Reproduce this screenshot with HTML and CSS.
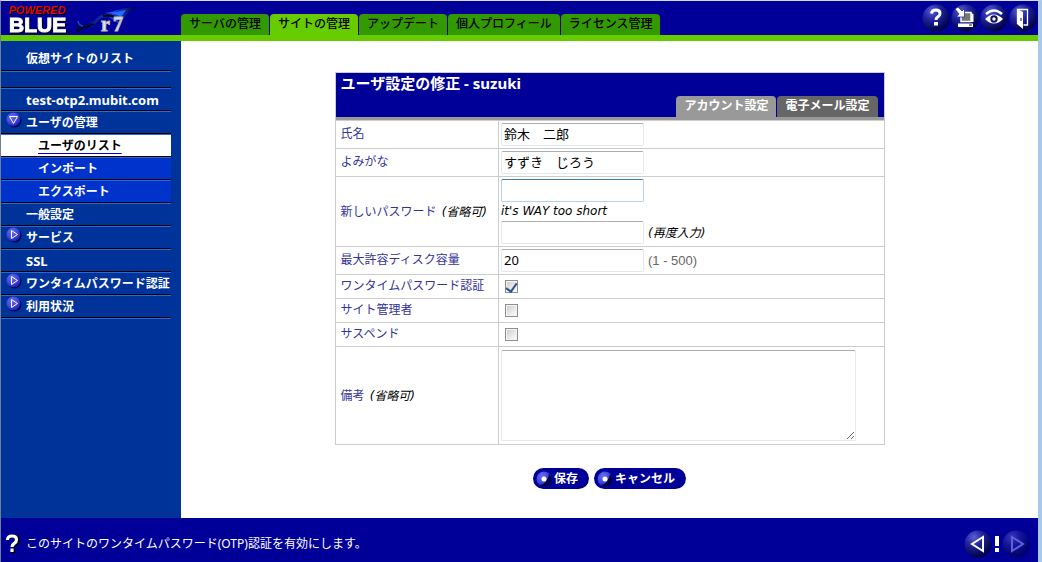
FILE: index.html
```html
<!DOCTYPE html>
<html lang="ja">
<head>
<meta charset="utf-8">
<title>ユーザ設定の修正</title>
<link rel="stylesheet" href="styles.css">
</head>
<body>
<svg class="defs" aria-hidden="true">
  <defs>
    <radialGradient id="orb" cx="35%" cy="25%" r="78%">
      <stop offset="0" stop-color="#5a60d0"/><stop offset=".4" stop-color="#2226a0"/><stop offset=".75" stop-color="#0b0e68"/><stop offset="1" stop-color="#00003c"/>
    </radialGradient>
    <radialGradient id="bead" cx="38%" cy="32%" r="78%">
      <stop offset="0" stop-color="#6a70f0"/><stop offset=".6" stop-color="#3840dc"/><stop offset="1" stop-color="#101480"/>
    </radialGradient>
    <linearGradient id="swoosh">
      <stop offset="0" stop-color="#001050"/><stop offset=".55" stop-color="#1648e8"/><stop offset=".8" stop-color="#0a2090"/><stop offset="1" stop-color="#000018"/>
    </linearGradient>
    <symbol id="bead-right" viewBox="0 0 16 16"><circle cx="8.500" cy="8.500" r="7" fill="#000055"/><circle cx="7.500" cy="7.500" r="7" fill="url(#bead)"/><path d="M5.500 3.500v8l6-4z" fill="none" stroke="#fff"/></symbol>
    <symbol id="bead-down" viewBox="0 0 16 16"><circle cx="8.500" cy="8.500" r="7" fill="#000055"/><circle cx="7.500" cy="7.500" r="7" fill="url(#bead)"/><path d="M3.500 4.500h8l-4 7z" fill="none" stroke="#fff"/></symbol>
    <symbol id="dot" viewBox="0 0 16 16"><circle cx="8" cy="8" r="7.500" fill="url(#bead)"/><path d="M13 3a7 7 0 0 1-9 11q7-1 9-11z" fill="#000044"/><circle cx="8" cy="8" r="2.500" fill="#fff"/></symbol>
  </defs>
</svg>
<div class="page">
  <header class="top">
    <svg class="logo" viewBox="0 0 180 34" role="img" aria-label="POWERED BLUE r7">
      <path d="M74 32q4-5 4-12 2 5 6 5 5-1 10-4l-1 3q-4 3-10 3-4 3-9 5z" fill="#000828"/>
      <path d="M77 20q1 5 5 5" stroke="#1a40c8" stroke-width="1.500" fill="none"/>
      <path d="M84 27q7-1 11-4l-8-1 6-2 5-5 12-4q10-4 25-5-9 5-13 13l-5 3-9-6-8 1-5 5-3 4z" fill="url(#swoosh)"/>
      <path d="M102 12q8-2 18 4l5-7-9 2z" fill="#246cff"/><path d="M102 15q10-2 18 5" stroke="#000020" stroke-width="2.500" fill="none"/>
      <text class="brand" x="8" y="31">BLUE</text>
      <text class="powered" x="8" y="13">POWERED</text>
      <text class="series" x="100" y="30">r</text><text class="series" x="112" y="30">7</text>
    </svg>
    <nav class="tabs">
      <a href="#">サーバの管理</a><a href="#" class="current">サイトの管理</a><a href="#">アップデート</a><a href="#">個人プロフィール</a><a href="#">ライセンス管理</a>
    </nav>
    <div class="tools">
      <button aria-label="ヘルプ"><svg viewBox="0 0 28 28"><circle cx="14" cy="14" r="13.500" fill="url(#orb)"/><path d="M9.500 9.500q.5-3.500 4.300-3.500 4.200 0 4.200 3.400 0 2-2.300 3.500-1.700 1.100-1.700 3" fill="none" stroke="#fff" stroke-width="3"/><path d="M12 18h4v3.500h-4z" fill="#fff"/></svg></button>
      <button aria-label="更新"><svg viewBox="0 0 28 28"><circle cx="14" cy="14" r="13.500" fill="url(#orb)"/><path d="M10 8.500h10v9H10z" fill="#777" stroke="#fff" stroke-width="1.500"/><path d="M20 9l2.500 1v8H20M7 19.500h15v3.500H7z" fill="#fff"/><path d="M18 21h3" stroke="#111166"/><path d="M4 5l3-2 4 4 2.500-2.500v8.500H5.500L8 10z" fill="#fff" stroke="#181b80" stroke-width=".7"/></svg></button>
      <button aria-label="モニタ"><svg viewBox="0 0 28 28"><circle cx="14" cy="14" r="13.500" fill="url(#orb)"/><path d="M6 10q8-7 16 0" fill="none" stroke="#fff" stroke-width="2.500"/><path d="M5 15q9-9 18 0-9 9-18 0z" fill="#fff"/><circle cx="14" cy="15" r="3.700" fill="#10125c"/><circle cx="14" cy="15" r="1.700" fill="#fff"/></svg></button>
      <button aria-label="ログアウト"><svg viewBox="0 0 28 28"><circle cx="14" cy="14" r="13.500" fill="url(#orb)"/><path d="M8.500 20V5.500h10V21h-4" fill="none" stroke="#fff" stroke-width="1.300"/><path d="M8 5l6 3v17l-6-5z" fill="#fff"/><path d="M12 14v3" stroke="#10125c"/></svg></button>
    </div>
  </header>
  <div class="middle">
    <nav class="side">
      <a href="#" class="first">仮想サイトのリスト</a>
      <div class="spacer"></div>
      <a href="#" class="host">test-otp2.mubit.com</a>
      <a href="#"><svg><use href="#bead-down"/></svg>ユーザの管理</a>
      <a href="#" class="sub selected">ユーザのリスト</a>
      <a href="#" class="sub">インポート</a>
      <a href="#" class="sub">エクスポート</a>
      <a href="#">一般設定</a>
      <a href="#"><svg><use href="#bead-right"/></svg>サービス</a>
      <a href="#" class="host">SSL</a>
      <a href="#"><svg><use href="#bead-right"/></svg>ワンタイムパスワード認証</a>
      <a href="#"><svg><use href="#bead-right"/></svg>利用状況</a>
    </nav>
    <main>
      <form>
        <section class="panel">
          <div class="panel-head">
            <h1>ユーザ設定の修正 - suzuki</h1>
            <nav class="panel-tabs"><a href="#" class="current">アカウント設定</a><a href="#">電子メール設定</a></nav>
          </div>
          <table>
            <tr><th><label for="name">氏名</label></th><td><input type="text" id="name" value="鈴木　二郎"></td></tr>
            <tr><th><label for="kana">よみがな</label></th><td><input type="text" id="kana" value="すずき　じろう"></td></tr>
            <tr class="tall"><th><label for="pass">新しいパスワード <i>(省略可)</i></label></th><td><div class="stack"><input type="password" id="pass" class="focus"><i>it's WAY too short</i><div class="line"><input type="password" id="again"><label for="again"><i>(再度入力)</i></label></div></div></td></tr>
            <tr><th><label for="quota">最大許容ディスク容量</label></th><td><div class="line"><input type="text" id="quota" value="20"><span class="range">(1 - 500)</span></div></td></tr>
            <tr class="check"><th><label for="otp">ワンタイムパスワード認証</label></th><td><input type="checkbox" id="otp" checked></td></tr>
            <tr class="check"><th><label for="admin">サイト管理者</label></th><td><input type="checkbox" id="admin"></td></tr>
            <tr class="check"><th><label for="suspend">サスペンド</label></th><td><input type="checkbox" id="suspend"></td></tr>
            <tr class="tall"><th><label for="memo">備考 <i>(省略可)</i></label></th><td><textarea id="memo"></textarea></td></tr>
          </table>
        </section>
        <div class="actions">
          <button type="button"><svg><use href="#dot"/></svg>保存</button>
          <button type="button"><svg><use href="#dot"/></svg>キャンセル</button>
        </div>
      </form>
    </main>
  </div>
  <footer>
    <svg class="hint" viewBox="0 0 16 20"><path d="M3 6q.5-4 5-4 5 0 5 4 0 2.500-2.500 4-2 1.200-2 3.500M8.500 15v4" fill="none" stroke="#000" stroke-width="3.500"/><path d="M2.500 6q0-4 4.500-4 4.500 0 4.500 3.700 0 2.300-2.300 3.800Q7 10.800 7 13M7 14.500v3.500" fill="none" stroke="#fff" stroke-width="3.200"/></svg>
    <p>このサイトのワンタイムパスワード(OTP)認証を有効にします。</p>
    <div class="pager">
      <button aria-label="前へ"><svg viewBox="0 0 28 28"><circle cx="14" cy="14" r="13.500" fill="url(#orb)"/><path d="M19 7v14L8 14z" fill="none" stroke="#fff" stroke-width="2"/></svg></button>
      <svg class="bang" viewBox="0 0 6 18"><path d="M1 1h4v10H1zM1 13h4v4H1z" fill="#fff"/></svg>
      <button aria-label="次へ" class="dim"><svg viewBox="0 0 28 28"><circle cx="14" cy="14" r="13.500" fill="url(#orb)"/><path d="M10 7v14l11-7z" fill="none" stroke="#a0a0ff" stroke-width="2"/></svg></button>
    </div>
  </footer>
</div>
</body>
</html>
```
FILE: styles.css
```css
* { box-sizing: border-box; }
body { margin: 0; background: #fff; color: #000; font: 12px/16px "Noto Sans", "Noto Sans CJK JP", sans-serif; }
a { color: inherit; text-decoration: none; }
button { border: 0; padding: 0; background: none; color: inherit; font: inherit; cursor: pointer; }
svg { display: block; flex: none; }
i { font-family: "DejaVu Sans", "Noto Sans CJK JP", sans-serif; }
.defs { position: absolute; width: 0; height: 0; }
.page { min-height: 100vh; display: flex; flex-direction: column; border-left: 1px solid #6c7f96; border-right: 4px solid #a9c9ea; border-top: 1px solid #d5dde8; }
.top { display: flex; align-items: flex-end; background: #000099; border-bottom: 6px solid #66cc00; height: 40px; }
.logo { width: 180px; height: 34px; overflow: visible; }
.brand { font: bold 21px "Liberation Sans", sans-serif; fill: #fff; stroke: #fff; stroke-width: 1px; filter: drop-shadow(1px 1px 0 #000); }
.powered { font: italic bold 11px "Liberation Sans", sans-serif; fill: #ee0000; filter: drop-shadow(1px 1px 0 #000); }
.series { font: bold 20px "Liberation Serif", serif; fill: #e8e8e8; stroke: #bbb; stroke-width: 1px; }
.tabs { display: flex; gap: 1px; font-weight: 500; }
.tabs a { height: 21px; padding: 1px 8px; line-height: 18px; background: #339900; border-radius: 4px 4px 0 0; }
.tabs .current { background: #66cc00; }
.tools { display: flex; gap: 1px; margin-left: auto; padding: 0 1px 0 0; align-self: center; }
.tools svg, .pager button svg { width: 28px; height: 28px; }
.middle { flex: 1; display: flex; }
.side { width: 180px; flex: none; background: #003399; padding: 6px 10px 0 0; color: #fff; font-weight: bold; }
.side a { position: relative; display: block; height: 23px; padding-left: 25px; line-height: 22px; border-bottom: 1px solid #000; border-top: 1px solid #3366cc; white-space: nowrap; }
.side .first { height: 24px; border-top: 0; line-height: 24px; }
.side .host { font-size: 13px; }
.side .spacer { height: 17px; border-top: 1px solid #3366cc; border-bottom: 1px solid #000; }
.side a svg { position: absolute; left: 5px; top: 0; width: 16px; height: 16px; }
.side .sub { padding-left: 37px; background: #0033cc; }
.side .selected { background: #fff; color: #000; text-decoration: underline; text-decoration-color: #0000cc; text-underline-offset: 3px; }
.side a:last-child { height: 24px; border-bottom: 1px solid #3366cc; box-shadow: inset 0 -1px #000; }
main { flex: 1; padding: 31px 16px 16px; }
form { max-width: 550px; margin: 0 auto; }
.panel { border: 1px solid #ccc; }
.panel-head { background: #000099; color: #fff; border-bottom: 3px solid #999; height: 47px; display: flex; flex-direction: column; justify-content: space-between; }
h1 { margin: 0; padding: 0 5px; font-size: 15px; line-height: 21px; }
.panel-tabs { display: flex; gap: 1px; justify-content: flex-end; padding-right: 6px; font-weight: bold; }
.panel-tabs a { height: 21px; padding: 0 8px; line-height: 20px; background: #666; border-radius: 4px 4px 0 0; }
.panel-tabs .current { background: #999; }
table { width: 100%; border-collapse: collapse; }
tr { border-top: 1px solid #ccc; }
th { width: 163px; padding: 0 4px 2px 5px; border-right: 1px solid #ccc; text-align: left; font-weight: normal; color: #333399; white-space: nowrap; }
th i { color: #000; margin-left: 2px; }
td { height: 28px; padding: 2px; }
.check td { height: 24px; padding: 0 6px; }
.tall th { padding-bottom: 0; }
input[type="text"], input[type="password"] { display: block; width: 143px; height: 23px; padding: 0 2px 2px; border: 1px solid #e3e9ef; border-top-color: #abadb3; border-radius: 2px; font: 13px "Noto Sans", "Noto Sans CJK JP", sans-serif; background: #fff; }
input[type="password"].focus { border-color: #b5cfe7; border-top-color: #3d7bad; }
.stack { display: flex; flex-direction: column; gap: 1px; }
.stack > i { line-height: 17px; }
.line { display: flex; align-items: center; gap: 4px; }
.range { font: 13px "Liberation Sans", sans-serif; color: #666; }
input[type="checkbox"] { appearance: none; display: block; width: 13px; height: 13px; margin: 0; border: 1px solid #8e8f8f; background: linear-gradient(135deg, #c8ccd0, #fff); box-shadow: inset 0 0 0 1px #f4f4f4; }
input[type="checkbox"]:checked::before { content: ""; display: block; width: 5px; height: 9px; margin: 0 auto; border: solid #34509a; border-width: 0 2px 2px 0; transform: rotate(35deg); }
textarea { display: block; width: 355px; max-width: 100%; height: 91px; margin: 1px 0; border: 1px solid #e3e9ef; border-top-color: #abadb3; border-radius: 2px; background: #fff; }
.actions { display: flex; justify-content: center; gap: 5px; margin-top: 23px; }
.actions button { display: flex; align-items: center; gap: 2px; height: 21px; padding: 0 11px 0 3px; border-radius: 11px; background: #000099; color: #fff; font-weight: bold; line-height: 18px; }
.actions svg { width: 16px; height: 16px; }
footer { display: flex; flex: none; align-items: center; gap: 5px; height: 44px; padding: 8px 8px 0 4px; background: #000099; color: #fff; }
footer p { margin: 0; }
.hint { width: 16px; height: 20px; }
.pager { display: flex; align-items: center; gap: 2px; margin-left: auto; }
.bang { width: 6px; height: 18px; }
.dim { opacity: .6; }
```
